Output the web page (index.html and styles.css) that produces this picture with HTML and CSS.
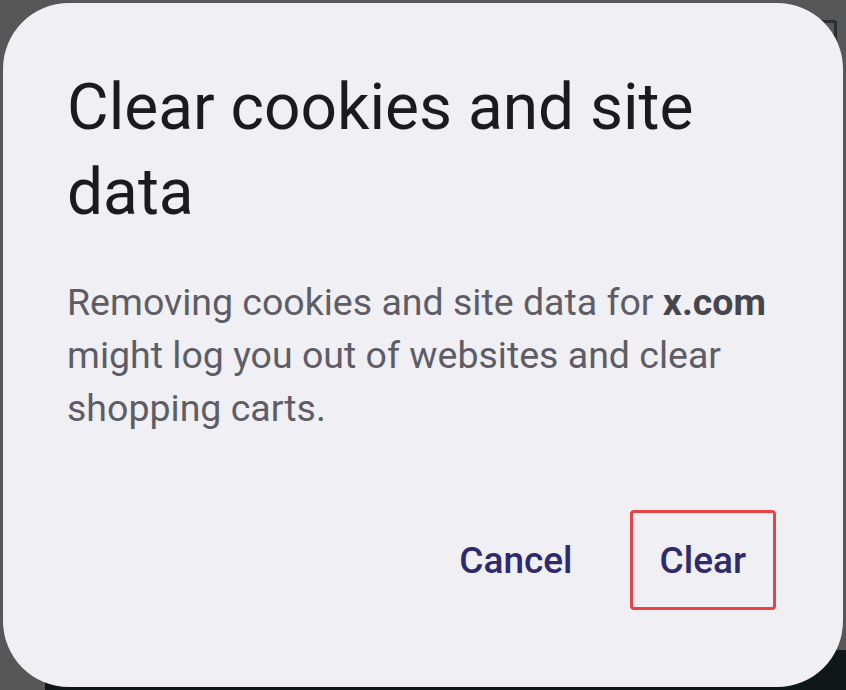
FILE: index.html
```html
<!DOCTYPE html>
<html lang="en">
  <head>
    <meta charset="UTF-8" />
    <meta name="viewport" content="width=device-width, initial-scale=1.0" />
    <title>Clear cookies and site data</title>
    <link rel="stylesheet" href="styles.css">
  </head>
  <body>
    <div class="Screen">
      <div class="backdrop-top">
        <span class="ghost-icon"></span>
      </div>
      <div class="backdrop-bottom"></div>

      <div class="Dialog">
        <div class="title">Clear cookies and site data</div>
        <div class="message">
          Removing cookies and site data for <b>x.com</b> might log you out of websites and clear shopping carts.
        </div>
        <div class="actions">
          <button class="btn">Cancel</button>
          <button class="btn marked">Clear</button>
        </div>
      </div>
    </div>
  </body>
</html>
```

FILE: styles.css
```css
body {
  margin: 0;
  padding: 0;
  font-family: Roboto, "Noto Sans", sans-serif;
  background-color: #575757;
}

.Screen {
  position: relative;
  width: 846px;
  height: 690px;
  overflow: hidden;
  display: flex;
  flex-direction: column;
}

.backdrop-top {
  flex: 1;
  display: flex;
  justify-content: flex-end;
  align-items: flex-start;
  padding: 20px 9px 0 0;
}

.ghost-icon {
  width: 16px;
  height: 21px;
  border: 3px solid #2a2f33;
  border-radius: 3px;
}

.backdrop-bottom {
  height: 40px;
  margin-left: 45px;
  background-color: #0f1719;
}

/* dialog sits over the page */
.Dialog {
  position: absolute;
  left: 3px;
  top: 3px;
  width: 840px;
  height: 684px;
  box-sizing: border-box;
  border-radius: 66px;
  background-color: #f0eff4;
  padding: 62px 67px 77px 64px;
  display: flex;
  flex-direction: column;
}

.title {
  font-size: 64px;
  line-height: 85px;
  color: #1b1b1f;
}

.message {
  margin-top: 41px;
  font-size: 37.5px;
  line-height: 53px;
  color: #5e5d66;
}

.message b {
  font-weight: bold;
  color: #46454c;
}

.actions {
  margin-top: auto;
  display: flex;
  justify-content: flex-end;
  gap: 27px;
}

.btn {
  font-family: Roboto, sans-serif;
  font-weight: 500;
  font-size: 37px;
  color: #2e2a6b;
  background: none;
  border: 3px solid transparent;
  border-radius: 4px;
  height: 100px;
  padding: 0 27px;
}

.marked {
  border-color: #e84343;
}
```
